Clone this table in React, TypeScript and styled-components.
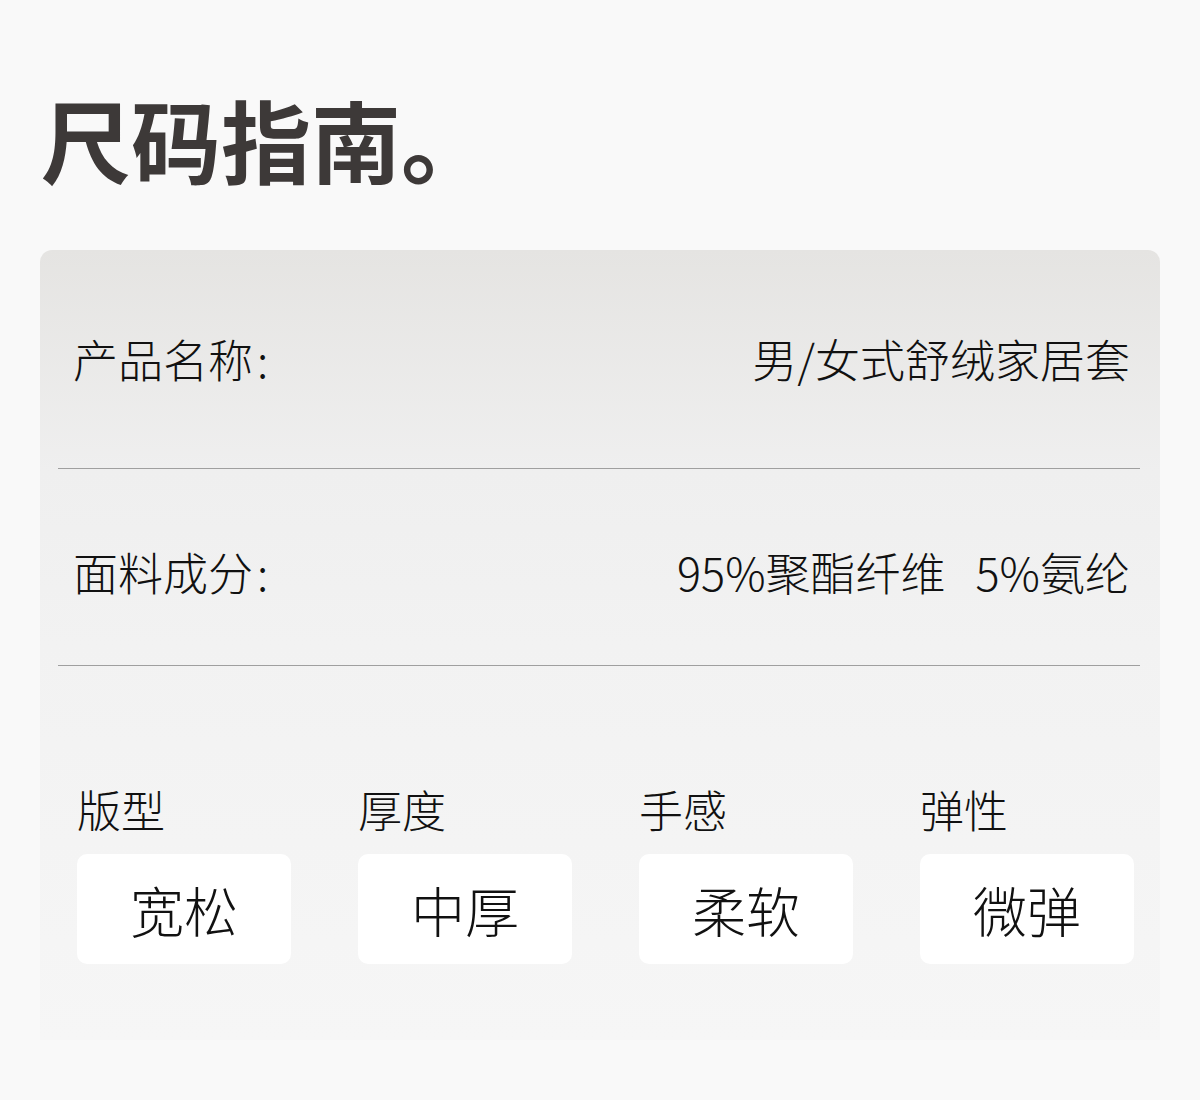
import React from 'react'
import styled, { createGlobalStyle } from 'styled-components'

const GlobalStyle = createGlobalStyle`
  html, body {
    margin: 0;
    padding: 0;
    background: #f9f9f9;
  }
  body {
    font-family: 'Noto Sans CJK SC', 'Noto Sans', sans-serif;
  }
`

const Page = styled.div`
  width: 1200px;
  height: 1100px;
  box-sizing: border-box;
  padding: 75px 40px 0;
  background: #f9f9f9;
`

const Title = styled.h1`
  margin: 0 0 49px 1px;
  font-size: 90px;
  line-height: 126px;
  font-weight: 700;
  color: #3d3938;
`

const Card = styled.div`
  border-radius: 12px 12px 0 0;
  background: linear-gradient(180deg, #e5e4e2 0%, #efefef 28%, #f2f2f2 50%, #f6f6f6 100%);
  padding: 0 20px 0 18px;
`

const InfoRow = styled.div<{ $top: number; $bottom: number }>`
  display: flex;
  justify-content: space-between;
  align-items: center;
  padding: ${(p) => p.$top}px 10px ${(p) => p.$bottom}px 15px;
  border-bottom: 1px solid #9f9f9f;
  font-size: 45px;
  line-height: 62px;
  font-weight: 300;
  color: #111;
`

const Colon = styled.span`
  margin-left: 4px;
`

const Gap = styled.span`
  display: inline-block;
  width: 30px;
`

const Options = styled.div`
  display: grid;
  grid-template-columns: repeat(4, 214px);
  column-gap: 67px;
  padding: 113px 0 76px 19px;
`

const Option = styled.div`
  display: flex;
  flex-direction: column;
`

const OptionLabel = styled.div`
  font-size: 44px;
  line-height: 60px;
  font-weight: 300;
  color: #111;
  margin-bottom: 15px;
`

const OptionBox = styled.div`
  height: 110px;
  border-radius: 10px;
  background: #fff;
  display: flex;
  align-items: center;
  justify-content: center;
  font-size: 54px;
  font-weight: 300;
  color: #111;
`

const options = [
  { label: '版型', value: '宽松' },
  { label: '厚度', value: '中厚' },
  { label: '手感', value: '柔软' },
  { label: '弹性', value: '微弹' },
]

export default function App() {
  return (
    <>
      <GlobalStyle />
      <Page>
        <Title>尺码指南。</Title>
        <Card>
          <InfoRow $top={78} $bottom={78}>
            <span>
              产品名称<Colon>:</Colon>
            </span>
            <span>男/女式舒绒家居套</span>
          </InfoRow>
          <InfoRow $top={72} $bottom={62}>
            <span>
              面料成分<Colon>:</Colon>
            </span>
            <span>
              95%聚酯纤维
              <Gap />
              5%氨纶
            </span>
          </InfoRow>
          <Options>
            {options.map((o) => (
              <Option key={o.label}>
                <OptionLabel>{o.label}</OptionLabel>
                <OptionBox>{o.value}</OptionBox>
              </Option>
            ))}
          </Options>
        </Card>
      </Page>
    </>
  )
}
